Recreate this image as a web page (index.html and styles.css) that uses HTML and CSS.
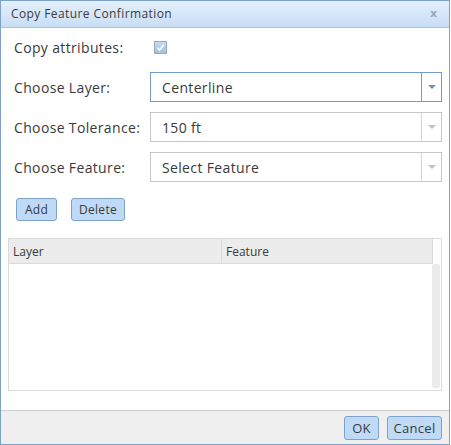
FILE: index.html
```html
<!DOCTYPE html>
<html>
<head>
<meta charset="utf-8">
<link rel="stylesheet" href="styles.css">
</head>
<body>
<div class="dialog">
  <div class="titlebar">
    <span class="title">Copy Feature Confirmation</span>
    <span class="close">x</span>
  </div>
  <div class="content">
    <div class="row">
      <span class="label">Copy attributes:</span>
      <span class="checkbox">
        <svg width="9" height="9" viewBox="0 0 9 9"><path d="M1.5 4.8 L3.6 7 L7.8 1.8" fill="none" stroke="#fff" stroke-width="1.6"/></svg>
      </span>
    </div>
    <div class="row">
      <span class="label">Choose Layer:</span>
      <div class="select focused">
        <span class="value">Centerline</span>
        <span class="arrow"><i></i></span>
      </div>
    </div>
    <div class="row">
      <span class="label">Choose Tolerance:</span>
      <div class="select">
        <span class="value">150 ft</span>
        <span class="arrow"><i></i></span>
      </div>
    </div>
    <div class="row">
      <span class="label">Choose Feature:</span>
      <div class="select">
        <span class="value">Select Feature</span>
        <span class="arrow"><i></i></span>
      </div>
    </div>
    <div class="actions">
      <button class="btn btn-add">Add</button>
      <button class="btn btn-delete">Delete</button>
    </div>
    <div class="grid">
      <div class="grid-head">
        <div class="col col-layer">Layer</div>
        <div class="col col-feature">Feature</div>
      </div>
      <div class="grid-body">
        <div class="grid-rows"></div>
        <div class="scrollbar"><div class="thumb"></div></div>
      </div>
    </div>
  </div>
  <div class="footer">
    <button class="btn btn-ok">OK</button>
    <button class="btn btn-cancel">Cancel</button>
  </div>
</div>
</body>
</html>
```
FILE: styles.css
```css
html, body {
  margin: 0;
  padding: 0;
  background: #fff;
}
body {
  font-family: "Open Sans", "Lato", sans-serif;
  color: #3a3a3a;
}
.dialog {
  width: 450px;
  height: 445px;
  box-sizing: border-box;
  border: 1px solid #7fa3c8;
  display: flex;
  flex-direction: column;
  background: #fff;
}
.titlebar {
  height: 27px;
  box-sizing: border-box;
  border-bottom: 1px solid #a9c4df;
  background: linear-gradient(#e4f0fc, #c8def5);
  display: flex;
  align-items: center;
  justify-content: space-between;
  padding: 0 12px 1px 10px;
}
.title {
  font-size: 12px;
  letter-spacing: 0.4px;
  color: #3a3a3a;
}
.close {
  font-size: 11px;
  font-weight: bold;
  color: #9aa7b4;
  font-family: "DejaVu Sans", sans-serif;
}
.content {
  padding: 4px 7px 0 7px;
  display: flex;
  flex-direction: column;
}
.row {
  height: 30px;
  display: flex;
  align-items: center;
  padding-left: 6px;
  margin-bottom: 10px;
}
.label {
  width: 136px;
  font-size: 14px;
  letter-spacing: 0.35px;
  flex: none;
}
.checkbox {
  width: 11px;
  height: 11px;
  border: 1px solid #9eaab6;
  background: linear-gradient(#c4dcf2, #9cc2e6);
  display: flex;
  align-items: center;
  justify-content: center;
  margin-left: 4px;
}
.select {
  flex: 1;
  height: 30px;
  box-sizing: border-box;
  border: 1px solid #c8c8c8;
  display: flex;
  align-items: stretch;
  background: #fff;
}
.select.focused {
  border-color: #6f9cc8;
}
.value {
  flex: 1;
  display: flex;
  align-items: center;
  padding-left: 11px;
  font-size: 14px;
  letter-spacing: 0.35px;
}
.arrow {
  width: 19px;
  border-left: 1px solid #d4d4d4;
  display: flex;
  align-items: center;
  justify-content: center;
  background: #fff;
}
.select.focused .arrow {
  border-left-color: #6f9cc8;
}
.arrow i {
  width: 0;
  height: 0;
  border-left: 4px solid transparent;
  border-right: 4px solid transparent;
  border-top: 4px solid #b9c3cd;
}
.select.focused .arrow i {
  border-top-color: #6f8fb3;
}
.actions {
  display: flex;
  gap: 14px;
  padding-left: 8px;
  margin-top: 6px;
}
.btn {
  font-family: "Open Sans", "Lato", sans-serif;
  font-size: 12px;
  letter-spacing: 0.3px;
  color: #3a3a3a;
  background: #bfdaf6;
  border: 1px solid #7fa3c8;
  border-radius: 3px;
  height: 23px;
  padding: 0;
  margin: 0;
}
.btn-add { width: 41px; }
.btn-delete { width: 54px; }
.grid {
  margin-top: 17px;
  height: 153px;
  box-sizing: border-box;
  border: 1px solid #dadada;
  display: flex;
  flex-direction: column;
}
.grid-head {
  height: 25px;
  box-sizing: border-box;
  display: flex;
  background: #ececec;
  border-bottom: 1px solid #dadada;
  margin-right: 8px;
  border-right: 1px solid #dadada;
}
.col {
  font-size: 12px;
  display: flex;
  align-items: center;
  padding-left: 4px;
}
.col-layer {
  width: 208px;
  border-right: 1px solid #dadada;
}
.col-feature {
  flex: 1;
}
.grid-body {
  flex: 1;
  display: flex;
}
.grid-rows { flex: 1; }
.scrollbar {
  width: 8px;
  padding: 0 1px 2px 0;
  display: flex;
}
.thumb {
  flex: 1;
  background: #ebebeb;
  border-radius: 2px;
}
.footer {
  margin-top: auto;
  height: 34px;
  box-sizing: border-box;
  border-top: 1px solid #cfcfcf;
  background: #efefef;
  display: flex;
  justify-content: flex-end;
  align-items: flex-start;
  gap: 8px;
  padding: 5px 7px 0 0;
}
.btn-ok { width: 35px; height: 24px; font-size: 13px; }
.btn-cancel { width: 55px; height: 24px; font-size: 13px; }
```
